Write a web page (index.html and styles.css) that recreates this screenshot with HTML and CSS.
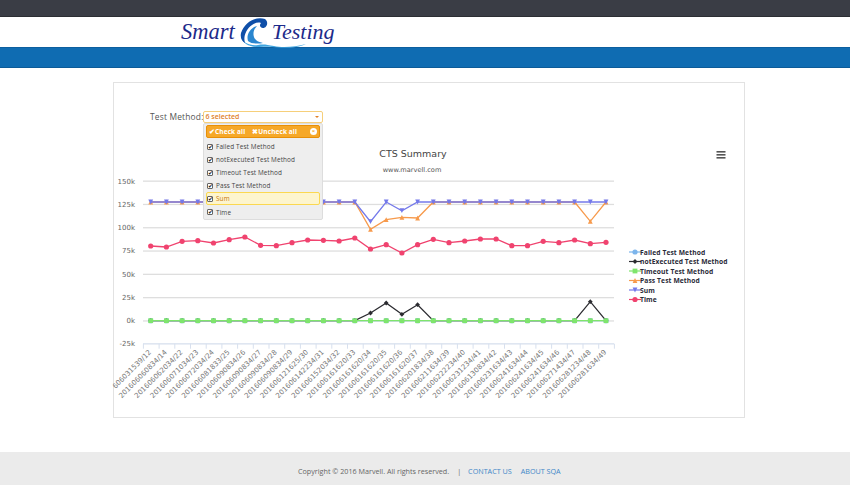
FILE: index.html
```html
<!DOCTYPE html>
<html lang="en">
<head>
  <meta charset="UTF-8">
  <title>Smart Testing</title>
  <link rel="stylesheet" href="styles.css">
</head>
<body>
  <div class="topbar"></div>
  <div class="brand">
    <div class="logo">
      <span class="logo-word">Smart</span>
      <svg class="logo-wave" width="68" height="31" viewBox="0 0 68 31">
        <path d="M1 18C2 26 10 29 18 28C24 27 27 28 34 29C42 31 56 30 66 27C56 32 40 31 32 30C24 29 14 32 6 27C2 24 1 21 1 18Z" fill="#3fa5e0"/>
        <path d="M25 2C17 -1 5 4 1 16C0 21 2 24 5 26C3 20 6 12 12 8C15 6 18 5 21 6C19 8 20 11 23 11C27 11 29 5 25 2Z" fill="#0f4fa8"/>
        <path d="M8 24C6 18 10 11 17 9C13 13 12 19 16 23C18 25 21 25 23 26C18 27 11 27 8 24Z" fill="#2a86cf"/>
      </svg>
      <span class="logo-word logo-word-2">Testing</span>
    </div>
  </div>
  <div class="blueband"></div>

  <div class="card">
    <div class="filter">
      <label class="filter-label">Test Method:</label>
      <div class="select">
        <div class="select-btn"><span>6 selected</span><span class="caret"></span></div>
        <div class="menu">
          <div class="menu-head">
            <span class="menu-action">✔Check all</span>
            <span class="menu-action">✖Uncheck all</span>
            <span class="menu-close">×</span>
          </div>
          <ul class="menu-list">
            <li><span class="box">✔</span>Failed Test Method</li>
            <li><span class="box">✔</span>notExecuted Test Method</li>
            <li><span class="box">✔</span>Timeout Test Method</li>
            <li><span class="box">✔</span>Pass Test Method</li>
            <li class="hover"><span class="box">✔</span>Sum</li>
            <li><span class="box">✔</span>Time</li>
          </ul>
        </div>
      </div>
    </div>
    <div id="chart" class="chart"></div>
  </div>

  <div class="footer">
    <span>Copyright © 2016 Marvell. All rights reserved.</span>
    <span class="sep">|</span>
    <a href="#">CONTACT US</a>
    <a href="#">ABOUT SQA</a>
  </div>

  <script>
    // chart canvas sits at page x 114, y 83 (inside card border)
    const ox = 114, oy = 83;
    const px = i => 150.7 + i * 15.7 - ox;
    const N = 30;

    const labels = ['606031539/12','201606060834/14','201606062034/22','201606071034/23','201606072034/24','201606081833/25','201606090834/26','201606090834/27','201606090834/28','201606090834/29','201606121625/30','201606142234/31','201606152034/32','201606161620/33','201606161620/34','201606161620/35','201606161620/36','201606161620/37','201606201834/38','201606211634/39','201606222234/40','201606231234/41','201606130834/42','201606231634/43','201606241634/44','201606241634/45','201606241634/46','201606271434/47','201606281234/48','201606281634/49'];

    const time = [246,247,241.3,240.7,243,239.7,237,245.3,245.7,242.7,240,240.3,241,238,249,244.7,253,244.7,239.3,242.7,241,239,239,245.7,245.7,241.3,242.7,240,243.7,242.3];
    const sum = Array(N).fill(202); sum[14] = 221.7; sum[16] = 210.7;
    const pass = Array(N).fill(202);
    pass[14] = 229.3; pass[15] = 219.7; pass[16] = 217.3; pass[17] = 218; pass[28] = 221.3;
    const black = Array(N).fill(320.7);
    black[14] = 313; black[15] = 303; black[16] = 314.3; black[17] = 304.7; black[28] = 301.7;
    const flat = Array(N).fill(320.7);

    const series = [
      { name: 'Failed Test Method', color: '#7cb5ec', shape: 'circle', data: flat },
      { name: 'notExecuted Test Method', color: '#2b2b30', shape: 'diamond', data: black },
      { name: 'Timeout Test Method', color: '#7fe56c', shape: 'square', data: flat },
      { name: 'Pass Test Method', color: '#f79a4c', shape: 'triangle', data: pass },
      { name: 'Sum', color: '#7479ea', shape: 'down', data: sum },
      { name: 'Time', color: '#f0436f', shape: 'circle', data: time }
    ];

    function marker(shape, x, y, color) {
      const r = 2.4;
      if (shape == 'circle') return `<circle cx="${x}" cy="${y}" r="${r + 0.2}" fill="${color}"/>`;
      if (shape == 'square') return `<rect x="${x - r}" y="${y - r}" width="${r * 2}" height="${r * 2}" fill="${color}"/>`;
      let pts = '';
      if (shape == 'diamond') pts = `${x},${y - r} ${x + r},${y} ${x},${y + r} ${x - r},${y}`;
      if (shape == 'triangle') pts = `${x},${y - r} ${x + r},${y + r} ${x - r},${y + r}`;
      if (shape == 'down') pts = `${x - r},${y - r} ${x + r},${y - r} ${x},${y + r}`;
      return `<polygon points="${pts}" fill="${color}"/>`;
    }

    let svg = '<svg width="630" height="334" viewBox="0 0 630 334" class="chart-svg">';

    // grid and y axis labels
    ['150k','125k','100k','75k','50k','25k','0k'].forEach(function (t, i) {
      const y = 181 + i * 23.3 - oy;
      svg += `<rect x="${143 - ox}" y="${y - 0.5}" width="471" height="1.3" fill="#dedede"/>`;
      svg += `<text class="axis" x="${135 - ox}" y="${y + 2.5}" text-anchor="end">${t}</text>`;
    });
    svg += `<text class="axis" x="${135 - ox}" y="${343.7 - oy + 2.5}" text-anchor="end">-25k</text>`;

    // x axis and ticks
    const axisY = 343.7 - oy;
    svg += `<rect x="${143 - ox}" y="${axisY - 0.5}" width="471" height="1.3" fill="#d8e0ee"/>`;
    for (let i = 0; i <= N; i++) {
      svg += `<rect x="${142.9 + i * 15.7 - ox}" y="${axisY}" width="1" height="5" fill="#d8e0ee"/>`;
    }
    labels.forEach(function (t, i) {
      const x = px(i) + 1, y = axisY + 9;
      svg += `<text class="axis tick" x="${x}" y="${y}" text-anchor="end" transform="rotate(-45 ${x} ${y})">${t}</text>`;
    });

    // series
    series.forEach(function (s) {
      const pts = s.data.map((y, i) => `${px(i)},${y - oy}`).join(' ');
      svg += `<polyline points="${pts}" fill="none" stroke="${s.color}" stroke-width="1.3"/>`;
      s.data.forEach(function (y, i) {
        svg += marker(s.shape, px(i), y - oy, s.color);
      });
    });

    // titles
    svg += `<text class="title" x="${413 - ox}" y="${157 - oy}" text-anchor="middle">CTS Summary</text>`;
    svg += `<text class="subtitle" x="${412 - ox}" y="${172 - oy}" text-anchor="middle">www.marvell.com</text>`;

    // menu icon
    [151, 154, 157].forEach(function (y) {
      svg += `<rect x="${716.5 - ox}" y="${y - oy}" width="9" height="1.6" fill="#555"/>`;
    });

    // legend
    series.forEach(function (s, i) {
      const y = 252 + i * 9.5 - oy;
      const x = 635 - ox;
      svg += `<rect x="${x - 6}" y="${y - 0.6}" width="12" height="1.2" fill="${s.color}"/>`;
      svg += marker(s.shape, x, y, s.color);
      svg += `<text class="legend" x="${640 - ox}" y="${y + 2.5}">${s.name}</text>`;
    });

    svg += '</svg>';
    document.getElementById('chart').innerHTML = svg;
  </script>
</body>
</html>
```

FILE: styles.css
```css
* {
  box-sizing: border-box;
}

body {
  margin: 0;
  font-family: "DejaVu Sans", sans-serif;
  background: #fff;
  height: 485px;
  overflow: hidden;
  display: flex;
  flex-direction: column;
}

.topbar {
  height: 17px;
  background: #3a3d45;
  border-bottom: 1px solid #2c2e33;
}

.brand {
  height: 30px;
  padding-left: 181px;
}

.logo {
  display: flex;
  height: 30px;
  position: relative;
}

.logo-word {
  font-family: "Liberation Serif", serif;
  font-style: italic;
  font-size: 22.5px;
  line-height: 30px;
  color: #1c2a8a;
}

.logo-word-2 {
  margin-left: 37px;
  font-size: 22px;
}

.logo-wave {
  position: absolute;
  left: 59px;
  top: 0;
}

.blueband {
  height: 21px;
  background: #0f6cb2;
  border-bottom: 1px solid #0c5b98;
  border-top: 1px solid #0c5f9f;
}

.card {
  position: relative;
  width: 632px;
  height: 336px;
  margin: 14px 0 0 113px;
  border: 1px solid #e2e2e2;
}

.chart-svg {
  display: block;
  overflow: visible;
}

.axis {
  font-size: 7px;
  fill: #666;
}

.tick {
  fill: #777;
}

.title {
  font-size: 9.5px;
  fill: #444;
}

.subtitle {
  font-size: 6.6px;
  fill: #555;
}

.legend {
  font-family: "Open Sans", sans-serif;
  font-size: 6.7px;
  font-weight: bold;
  letter-spacing: 0.1px;
  fill: #2a2a38;
}

.filter {
  position: absolute;
  left: 36px;
  top: 28px;
  display: flex;
  z-index: 2;
}

.filter-label {
  width: 53px;
  font-family: "Open Sans", sans-serif;
  font-size: 8.4px;
  letter-spacing: 0.2px;
  line-height: 12px;
  color: #555;
  white-space: nowrap;
}

.select {
  position: relative;
  width: 120px;
}

.select-btn {
  height: 12px;
  border: 1px solid #f6cf7a;
  border-radius: 2px;
  padding: 0 3px 0 1.5px;
  font-family: "Open Sans", sans-serif;
  font-size: 7px;
  font-weight: 600;
  line-height: 10px;
  color: #e0812a;
  display: flex;
  justify-content: space-between;
  align-items: center;
}

.caret {
  width: 0;
  height: 0;
  border-left: 2px solid transparent;
  border-right: 2px solid transparent;
  border-top: 2px solid #e0812a;
}

.menu {
  position: absolute;
  left: 0;
  top: 12px;
  width: 120px;
  height: 97px;
  padding: 1px 2px;
  background: #eee;
  border: 1px solid #ddd;
  border-radius: 2px;
}

.menu-head {
  height: 13px;
  margin-bottom: 2px;
  padding: 0 2px;
  background: #f6a828;
  border: 1px solid #e78f08;
  border-radius: 2px;
  display: flex;
  align-items: center;
  gap: 7px;
  font-family: "Open Sans", sans-serif;
  font-size: 6.5px;
  font-weight: bold;
  letter-spacing: 0.1px;
  color: #fff;
  white-space: nowrap;
}

.menu-close {
  margin-left: auto;
  width: 7px;
  height: 7px;
  flex: none;
  border-radius: 50%;
  background: #fff;
  color: #f6a828;
  font-size: 6px;
  line-height: 7px;
  text-align: center;
}

.menu-list {
  list-style: none;
  margin: 0;
  padding: 0;
}

.menu-list li {
  height: 13.1px;
  display: flex;
  align-items: center;
  padding-left: 1px;
  font-family: "Open Sans", sans-serif;
  font-size: 6.4px;
  letter-spacing: 0.12px;
  color: #444;
  white-space: nowrap;
}

.menu-list li.hover {
  background: #fdf5ce;
  border: 1px solid #fbd850;
  border-radius: 2px;
  padding-left: 0;
  color: #c77405;
}

.box {
  width: 6px;
  height: 6px;
  margin-right: 3px;
  background: #fff;
  border: 1px solid #666;
  border-radius: 1px;
  font-size: 6px;
  line-height: 5px;
  letter-spacing: 0;
  color: #222;
  text-align: center;
  flex: none;
}

.footer {
  margin-top: 34px;
  height: 33px;
  background: #ebebeb;
  display: flex;
  align-items: center;
  font-family: "Open Sans", sans-serif;
  font-size: 7.2px;
  color: #666;
  padding: 4px 0 0 298px;
}

.sep {
  margin: 0 7px 0 8px;
}

.footer a {
  color: #3f87c8;
  text-decoration: none;
  margin-right: 9px;
}
```
